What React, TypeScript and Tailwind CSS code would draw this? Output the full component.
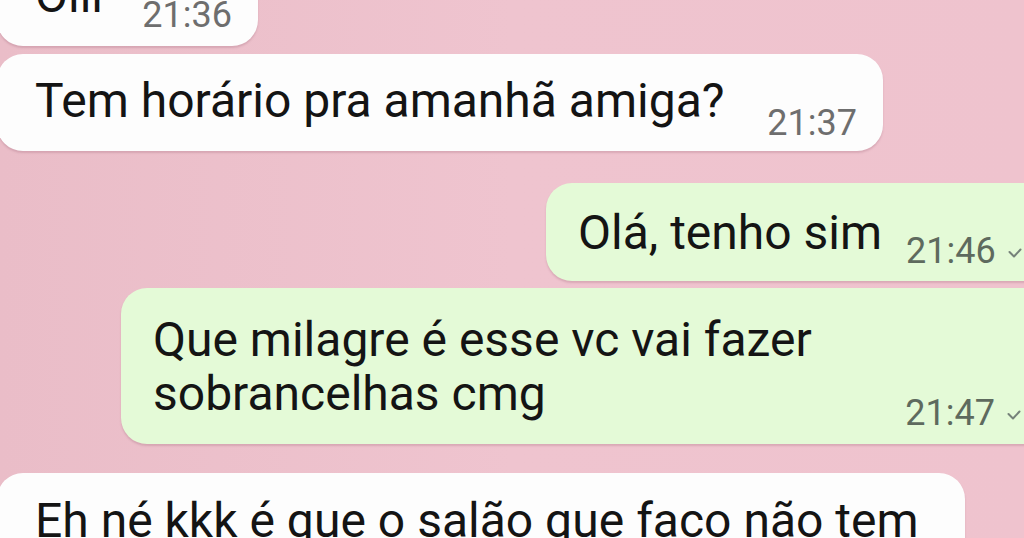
import React from "react";

const font = { fontFamily: "Roboto, 'Noto Sans', sans-serif" };

function Check() {
  return (
    <svg
      viewBox="0 0 14 10"
      className="mb-[13px] ml-[12px] h-[10px] w-[14px] shrink-0"
      fill="none"
      stroke="#76827a"
      strokeWidth="2"
      strokeLinecap="round"
      strokeLinejoin="round"
    >
      <polyline points="1.5,4 6,8.5 12.5,1.5" />
    </svg>
  );
}

export default function App() {
  return (
    <div
      className="h-[538px] w-[1024px] overflow-hidden bg-gradient-to-r from-[#eabdc8] via-[#efc4cf] to-[#efc3ce]"
      style={font}
    >
      <div className="-ml-[3px] -mt-[52px] flex w-[1050px] flex-col">
        {/* received: Oiii */}
        <div className="flex w-[261px] items-end rounded-[26px] bg-[#fdfdfd] pb-[11px] pl-[38px] pr-[26px] pt-[21px] shadow-[0_2px_2px_rgba(150,90,110,0.25)]">
          <span className="mb-[12px] text-[48px] leading-[54px] text-[#141414]">Oiii</span>
          <span className="ml-auto text-[36px] leading-[40px] text-[#6e6e6e]">21:36</span>
        </div>

        {/* received: Tem horário */}
        <div className="mt-[8px] flex w-[886px] items-end rounded-[26px] bg-[#fdfdfd] pb-[8px] pl-[38px] pr-[26px] pt-[20px] shadow-[0_2px_2px_rgba(150,90,110,0.25)]">
          <span className="mb-[15px] text-[48px] leading-[54px] text-[#141414]">
            Tem horário pra amanhã amiga?
          </span>
          <span className="ml-auto text-[36px] leading-[40px] text-[#6e6e6e]">21:37</span>
        </div>

        {/* sent: Olá */}
        <div className="ml-[549px] mt-[32px] flex items-end self-start rounded-l-[26px] bg-[#e4fad7] pb-[10px] pl-[32px] pr-[19px] pt-[23px] shadow-[0_2px_2px_rgba(150,90,110,0.25)]">
          <span className="mb-[11px] text-[48px] leading-[54px] text-[#141414]">Olá, tenho sim</span>
          <span className="ml-[24px] text-[36px] leading-[40px] text-[#5e6a5e]">21:46</span>
          <Check />
        </div>

        {/* sent: Que milagre */}
        <div className="ml-[124px] mt-[7px] flex w-[919px] items-end rounded-l-[26px] bg-[#e4fad7] pb-[11px] pl-[32px] pr-[19px] pt-[25px] shadow-[0_2px_2px_rgba(150,90,110,0.25)]">
          <p className="mb-[12px] w-[680px] text-[48px] leading-[54px] text-[#141414]">
            Que milagre é esse vc vai fazer sobrancelhas cmg
          </p>
          <span className="ml-auto text-[36px] leading-[40px] text-[#5e6a5e]">21:47</span>
          <Check />
        </div>

        {/* received: Eh né */}
        <div className="mt-[29px] h-[120px] w-[968px] rounded-[26px] bg-[#fdfdfd] pl-[38px] pt-[21px] shadow-[0_2px_2px_rgba(150,90,110,0.25)]">
          <p className="text-[48px] leading-[54px] text-[#141414]">
            Eh né kkk é que o salão que faco não tem
          </p>
        </div>
      </div>
    </div>
  );
}
